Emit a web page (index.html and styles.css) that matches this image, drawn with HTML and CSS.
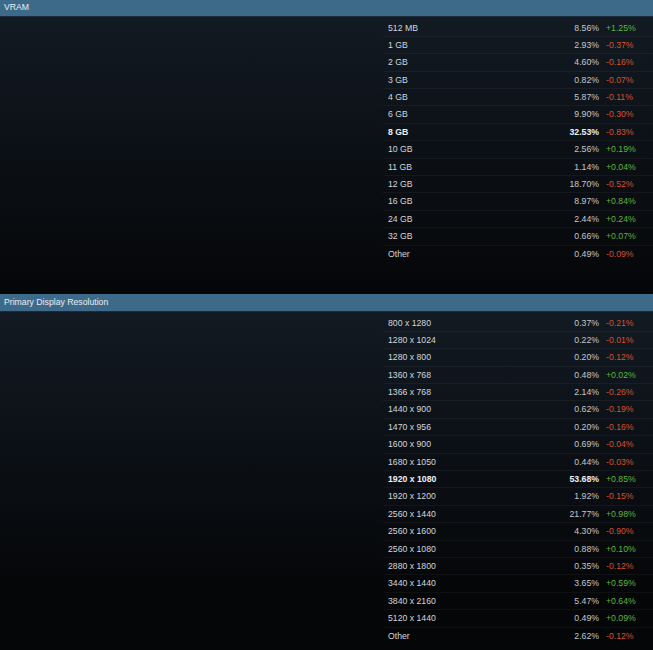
FILE: index.html
```html
<!DOCTYPE html>
<html lang="en">
<head>
  <meta charset="UTF-8" />
  <meta name="viewport" content="width=device-width, initial-scale=1.0"/>
  <title>Hardware Survey</title>
  <link rel="stylesheet" href="styles.css">
</head>
<body>
  <!-- VRAM -->
  <section class="stat first">
    <div class="stat-title">VRAM</div>
    <div class="stat-body">
      <div class="spacer"></div>
      <div class="stat-table">
        <div class="row"><span class="name">512 MB</span><span class="pct">8.56%</span><span class="chg up">+1.25%</span></div>
        <div class="row"><span class="name">1 GB</span><span class="pct">2.93%</span><span class="chg down">-0.37%</span></div>
        <div class="row"><span class="name">2 GB</span><span class="pct">4.60%</span><span class="chg down">-0.16%</span></div>
        <div class="row"><span class="name">3 GB</span><span class="pct">0.82%</span><span class="chg down">-0.07%</span></div>
        <div class="row"><span class="name">4 GB</span><span class="pct">5.87%</span><span class="chg down">-0.11%</span></div>
        <div class="row"><span class="name">6 GB</span><span class="pct">9.90%</span><span class="chg down">-0.30%</span></div>
        <div class="row top"><span class="name">8 GB</span><span class="pct">32.53%</span><span class="chg down">-0.83%</span></div>
        <div class="row"><span class="name">10 GB</span><span class="pct">2.56%</span><span class="chg up">+0.19%</span></div>
        <div class="row"><span class="name">11 GB</span><span class="pct">1.14%</span><span class="chg up">+0.04%</span></div>
        <div class="row"><span class="name">12 GB</span><span class="pct">18.70%</span><span class="chg down">-0.52%</span></div>
        <div class="row"><span class="name">16 GB</span><span class="pct">8.97%</span><span class="chg up">+0.84%</span></div>
        <div class="row"><span class="name">24 GB</span><span class="pct">2.44%</span><span class="chg up">+0.24%</span></div>
        <div class="row"><span class="name">32 GB</span><span class="pct">0.66%</span><span class="chg up">+0.07%</span></div>
        <div class="row"><span class="name">Other</span><span class="pct">0.49%</span><span class="chg down">-0.09%</span></div>
      </div>
    </div>
  </section>

  <!-- Primary Display Resolution -->
  <section class="stat">
    <div class="stat-title">Primary Display Resolution</div>
    <div class="stat-body">
      <div class="spacer"></div>
      <div class="stat-table">
        <div class="row"><span class="name">800 x 1280</span><span class="pct">0.37%</span><span class="chg down">-0.21%</span></div>
        <div class="row"><span class="name">1280 x 1024</span><span class="pct">0.22%</span><span class="chg down">-0.01%</span></div>
        <div class="row"><span class="name">1280 x 800</span><span class="pct">0.20%</span><span class="chg down">-0.12%</span></div>
        <div class="row"><span class="name">1360 x 768</span><span class="pct">0.48%</span><span class="chg up">+0.02%</span></div>
        <div class="row"><span class="name">1366 x 768</span><span class="pct">2.14%</span><span class="chg down">-0.26%</span></div>
        <div class="row"><span class="name">1440 x 900</span><span class="pct">0.62%</span><span class="chg down">-0.19%</span></div>
        <div class="row"><span class="name">1470 x 956</span><span class="pct">0.20%</span><span class="chg down">-0.16%</span></div>
        <div class="row"><span class="name">1600 x 900</span><span class="pct">0.69%</span><span class="chg down">-0.04%</span></div>
        <div class="row"><span class="name">1680 x 1050</span><span class="pct">0.44%</span><span class="chg down">-0.03%</span></div>
        <div class="row top"><span class="name">1920 x 1080</span><span class="pct">53.68%</span><span class="chg up">+0.85%</span></div>
        <div class="row"><span class="name">1920 x 1200</span><span class="pct">1.92%</span><span class="chg down">-0.15%</span></div>
        <div class="row"><span class="name">2560 x 1440</span><span class="pct">21.77%</span><span class="chg up">+0.98%</span></div>
        <div class="row"><span class="name">2560 x 1600</span><span class="pct">4.30%</span><span class="chg down">-0.90%</span></div>
        <div class="row"><span class="name">2560 x 1080</span><span class="pct">0.88%</span><span class="chg up">+0.10%</span></div>
        <div class="row"><span class="name">2880 x 1800</span><span class="pct">0.35%</span><span class="chg down">-0.12%</span></div>
        <div class="row"><span class="name">3440 x 1440</span><span class="pct">3.65%</span><span class="chg up">+0.59%</span></div>
        <div class="row"><span class="name">3840 x 2160</span><span class="pct">5.47%</span><span class="chg up">+0.64%</span></div>
        <div class="row"><span class="name">5120 x 1440</span><span class="pct">0.49%</span><span class="chg up">+0.09%</span></div>
        <div class="row"><span class="name">Other</span><span class="pct">2.62%</span><span class="chg down">-0.12%</span></div>
      </div>
    </div>
  </section>
</body>
</html>
```

FILE: styles.css
```css
* {
  margin: 0;
  padding: 0;
  box-sizing: border-box;
}
body {
  font-family: "Liberation Sans", Arial, sans-serif;
  font-size: 8.7px;
  background: #050608;
  color: #c9cfd4;
  overflow: hidden;
}

.stat {
  min-height: 356px;
  background: linear-gradient(to bottom, #131b24, #050608 296px);
}
.stat.first {
  height: 295px;
  min-height: 0;
  margin-top: -1px;
}

.stat-title {
  height: 18px;
  line-height: 17px;
  padding-left: 4px;
  background: #3e6a8a;
  border-bottom: 1px solid #1b2b3a;
  color: #e8eef3;
}

.stat-body {
  display: grid;
  grid-template-columns: 383px 1fr;
  padding-top: 2.5px;
}

.row {
  display: grid;
  grid-template-columns: 149px 60px 54px;
  column-gap: 7px;
  height: 17.4px;
  line-height: 16.4px;
  border-bottom: 1px solid rgba(255, 255, 255, 0.045);
}
.row:last-child {
  border-bottom: none;
}
.row .name {
  padding-left: 5px;
  color: #d2d7db;
}
.row .pct {
  text-align: right;
  color: #c3c8cc;
}
.row.top .name,
.row.top .pct {
  font-weight: bold;
  color: #eef1f3;
}
.chg.up {
  color: #62b33a;
}
.chg.down {
  color: #d3512f;
}
```
